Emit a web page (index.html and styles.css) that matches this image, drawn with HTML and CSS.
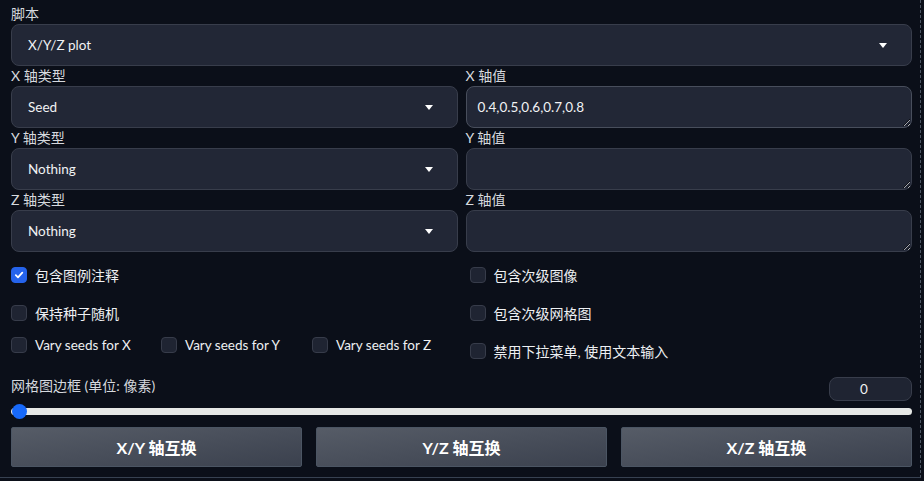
FILE: index.html
```html
<!DOCTYPE html>
<html lang="zh">
<head>
<meta charset="utf-8">
<title>X/Y/Z plot</title>
<link rel="stylesheet" href="styles.css">
</head>
<body>
<div class="panel">
  <div class="field">
    <span class="lbl">脚本</span>
    <div class="select">X/Y/Z plot<span class="caret"></span></div>
  </div>

  <div class="axes">
    <div class="field">
      <span class="lbl">X 轴类型</span>
      <div class="select">Seed<span class="caret"></span></div>
    </div>
    <div class="field">
      <span class="lbl">X 轴值</span>
      <textarea class="area area-focus">0.4,0.5,0.6,0.7,0.8</textarea>
    </div>
    <div class="field">
      <span class="lbl">Y 轴类型</span>
      <div class="select">Nothing<span class="caret"></span></div>
    </div>
    <div class="field">
      <span class="lbl">Y 轴值</span>
      <textarea class="area"></textarea>
    </div>
    <div class="field">
      <span class="lbl">Z 轴类型</span>
      <div class="select">Nothing<span class="caret"></span></div>
    </div>
    <div class="field">
      <span class="lbl">Z 轴值</span>
      <textarea class="area"></textarea>
    </div>
  </div>

  <div class="checks">
    <div class="col">
      <div class="row">
        <span class="cb cb-on"><svg width="10" height="10" viewBox="0 0 10 10"><path d="M1.8 5.2 L4 7.3 L8.3 2.6" fill="none" stroke="#fff" stroke-width="1.8" stroke-linecap="round" stroke-linejoin="round"/></svg></span>
        <span class="cb-text">包含图例注释</span>
      </div>
      <div class="row">
        <span class="cb"></span><span class="cb-text">保持种子随机</span>
      </div>
      <div class="row row-short">
        <div class="vary"><span class="cb"></span><span class="cb-text latin">Vary seeds for X</span></div>
        <div class="vary vary-mid"><span class="cb"></span><span class="cb-text latin">Vary seeds for Y</span></div>
        <div class="vary vary-last"><span class="cb"></span><span class="cb-text latin">Vary seeds for Z</span></div>
      </div>
    </div>
    <div class="col col-right">
      <div class="row">
        <span class="cb"></span><span class="cb-text">包含次级图像</span>
      </div>
      <div class="row">
        <span class="cb"></span><span class="cb-text">包含次级网格图</span>
      </div>
      <div class="row">
        <span class="cb"></span><span class="cb-text">禁用下拉菜单, 使用文本输入</span>
      </div>
    </div>
  </div>

  <div class="slider-head">
    <span class="lbl">网格图边框 (单位: 像素)</span>
    <div class="num">0</div>
  </div>
  <div class="slider">
    <div class="track"></div>
    <div class="thumb"></div>
  </div>

  <div class="buttons">
    <button class="btn">X/Y 轴互换</button>
    <button class="btn">Y/Z 轴互换</button>
    <button class="btn">X/Z 轴互换</button>
  </div>
</div>
</body>
</html>
```

FILE: styles.css
```css
* { box-sizing: border-box; }

html, body {
  margin: 0;
  background: #0b0f19;
}

body {
  font-family: "Lato", "Noto Sans CJK SC", sans-serif;
  color: #e5e7eb;
}

.panel {
  width: 921px;
  height: 478px;
  padding: 4px 8px 0 11px;
  border-right: 1px dashed #4b5563;
  border-bottom: 1px solid #374151;
}

.lbl {
  display: block;
  height: 20px;
  line-height: 20px;
  font-size: 14px;
  color: #d6d9de;
  white-space: nowrap;
}

.select {
  height: 42px;
  display: flex;
  align-items: center;
  padding: 0 16px;
  border: 1px solid #383d4b;
  border-radius: 8px;
  background: #222736;
  font-size: 13.5px;
  color: #f1f2f4;
}

.caret {
  margin-left: auto;
  margin-right: 8px;
  width: 0;
  height: 0;
  border-left: 4px solid transparent;
  border-right: 4px solid transparent;
  border-top: 5px solid #ffffff;
}

.axes {
  display: grid;
  grid-template-columns: minmax(0, 1fr) minmax(0, 1fr);
  column-gap: 8px;
}

.area {
  display: block;
  width: 100%;
  height: 42px;
  margin: 0;
  padding: 10px 11px;
  border: 1px solid #383d4b;
  border-radius: 8px;
  background: #222736;
  color: #f1f2f4;
  font-family: "Lato", "Noto Sans CJK SC", sans-serif;
  font-size: 13.5px;
  line-height: 20px;
  resize: vertical;
  color-scheme: dark;
  outline: none;
}

.area-focus {
  border-color: #484e5c;
}

.checks {
  margin-top: 4px;
  display: grid;
  grid-template-columns: minmax(0, 1fr) minmax(0, 1fr);
  column-gap: 8px;
}

.col {
  display: flex;
  flex-direction: column;
  min-width: 0;
}

.col-right {
  padding-left: 4px;
}

.row {
  height: 38px;
  display: flex;
  align-items: center;
}

.row-short {
  height: 26px;
}

.vary {
  width: 150px;
  flex-shrink: 0;
  display: flex;
  align-items: center;
}

.vary-mid {
  width: 151px;
}

.vary-last {
  width: auto;
}

.cb {
  width: 16px;
  height: 16px;
  flex-shrink: 0;
  margin-right: 8px;
  border: 1px solid #373c4a;
  border-radius: 4px;
  background: #1f2432;
  display: flex;
  align-items: center;
  justify-content: center;
}

.cb-on {
  background: #2563eb;
  border-color: #2563eb;
}

.cb-text {
  font-size: 14px;
  color: #eef0f3;
  white-space: nowrap;
}

.latin {
  font-size: 13.5px;
}

.slider-head {
  margin-top: 6px;
  height: 25px;
  display: flex;
  justify-content: space-between;
  align-items: flex-start;
}

.num {
  margin-top: 1px;
  width: 83px;
  height: 24px;
  line-height: 22px;
  padding-left: 30px;
  border: 1px solid #383d4b;
  border-radius: 8px;
  background: #1f2432;
  font-size: 13.5px;
  color: #f1f2f4;
}

.slider {
  position: relative;
  height: 20px;
  display: flex;
  align-items: center;
}

.track {
  width: 100%;
  height: 7px;
  border-radius: 4px;
  background: #e6e8e6;
}

.thumb {
  position: absolute;
  left: 1px;
  top: 50%;
  width: 15px;
  height: 15px;
  margin-top: -7.5px;
  border-radius: 50%;
  background: #1769fa;
}

.buttons {
  margin-top: 6px;
  display: grid;
  grid-template-columns: 1fr 1fr 1fr;
  column-gap: 14px;
}

.btn {
  height: 40px;
  margin: 0;
  border: 1px solid #4b5563;
  border-radius: 2px;
  background: linear-gradient(to bottom right, #565c67, #3b414e);
  color: #ffffff;
  font-family: "Lato", "Noto Sans CJK SC", sans-serif;
  font-weight: 700;
  font-size: 16px;
}
```
